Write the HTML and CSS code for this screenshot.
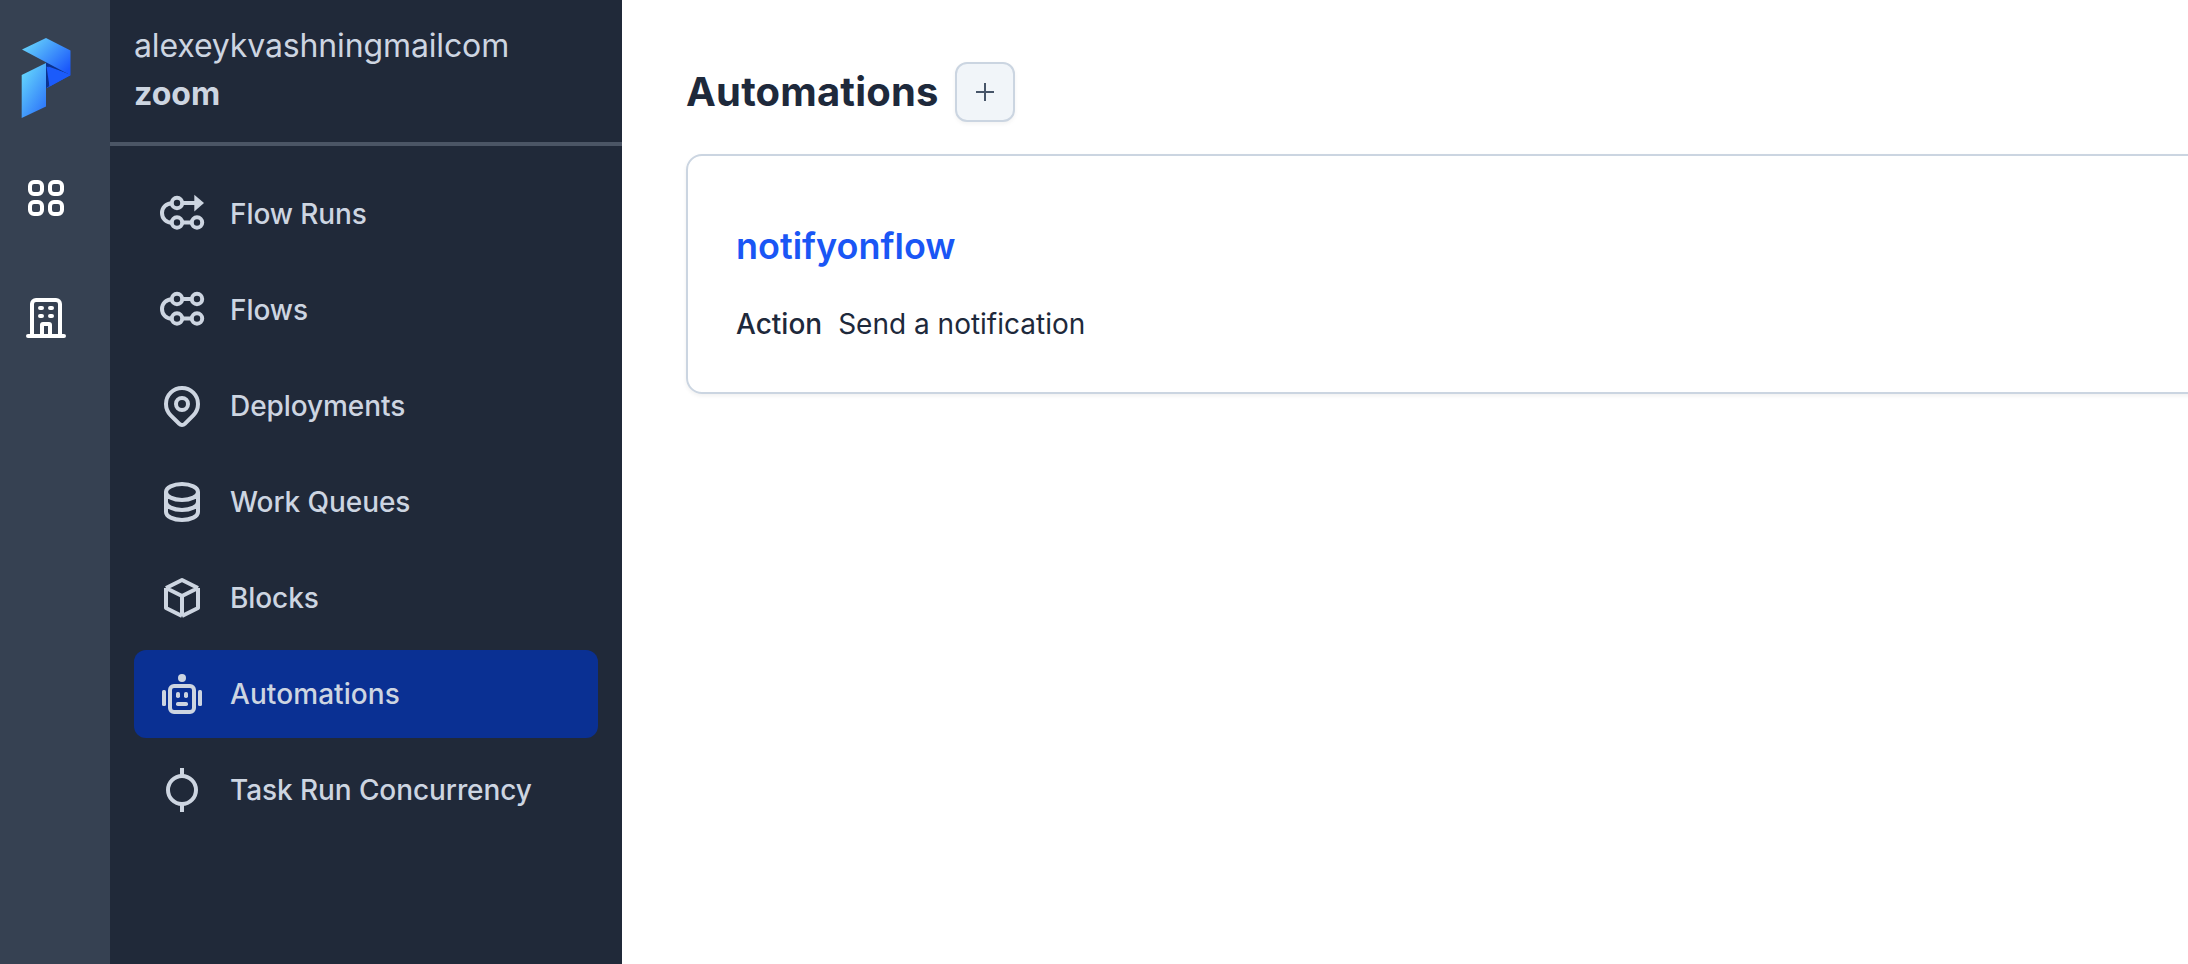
FILE: index.html
```html
<!DOCTYPE html>
<html lang="en">
<head>
<meta charset="utf-8">
<title>Automations</title>
<link rel="stylesheet" href="styles.css">
</head>
<body>
<div class="app">
  <aside class="rail">
    <svg class="logo" width="50" height="82" viewBox="0 0 50 82">
      <defs>
        <linearGradient id="top" gradientUnits="userSpaceOnUse" x1="10" y1="4" x2="43" y2="37"><stop offset="0" stop-color="#63cdfb"/><stop offset="1" stop-color="#1a57fb"/></linearGradient>
        <linearGradient id="stem" gradientUnits="userSpaceOnUse" x1="-2" y1="42" x2="30" y2="62"><stop offset="0" stop-color="#63d3fc"/><stop offset="1" stop-color="#2f78fa"/></linearGradient>
      </defs>
      <path fill="#1b5bfb" d="M25 26l24.500 12.300L26 51z"/>
      <path fill="#0b318f" d="M25 25l23 12-20.500-7.500L28.500 49 25 51z"/>
      <path fill="#1b5bfb" d="M25.500 29.500l24 8.500-21 11.500z"/>
      <path fill="url(#top)" d="M1 12.500L25 1l24.500 12.500v24.800z"/>
      <path fill="url(#stem)" d="M.700 38L25 26v43.500L.700 81z"/>
    </svg>
    <svg class="icon" viewBox="0 0 48 48"><rect x="8" y="8" width="12" height="12" rx="4"/><rect x="28" y="8" width="12" height="12" rx="4"/><rect x="8" y="28" width="12" height="12" rx="4"/><rect x="28" y="28" width="12" height="12" rx="4"/></svg>
    <svg class="icon" viewBox="0 0 48 48"><path stroke-linecap="round" d="M6 42h36M10 42V10a4 4 0 0 1 4-4h20a4 4 0 0 1 4 4v32M20 42V31a1 1 0 0 1 1-1h6a1 1 0 0 1 1 1v11M18 14h2M28 14h2M18 22h2M28 22h2"/></svg>
  </aside>
  <nav class="sidebar">
    <header class="account">
      <div class="owner">alexeykvashningmailcom</div>
      <div class="workspace">zoom</div>
    </header>
    <div class="menu">
      <a class="item"><svg class="icon" viewBox="0 0 48 48"><circle cx="19" cy="13" r="5.200"/><circle cx="19" cy="32.500" r="5.200"/><circle cx="39" cy="32.500" r="5.200"/><path d="M14 13.200C8 13.500 4 17.500 4 23s4 9.500 10 9.800M24 13h13M24 32.500h10"/><path class="solid" d="M36.300 4.800L46 13l-9.700 8.500z"/></svg>Flow Runs</a>
      <a class="item"><svg class="icon" viewBox="0 0 48 48"><circle cx="19" cy="13" r="5.200"/><circle cx="39" cy="13" r="5.200"/><circle cx="19" cy="32.500" r="5.200"/><circle cx="39" cy="32.500" r="5.200"/><path d="M14 13.200C8 13.500 4 17.500 4 23s4 9.500 10 9.800M24 13h10M24 32.500h10"/></svg>Flows</a>
      <a class="item"><svg class="icon" viewBox="0 0 48 48"><circle cx="24" cy="22" r="6"/><path d="M35.300 33.300L26.800 41.800a4 4 0 0 1-5.600 0L12.700 33.300a16 16 0 1 1 22.600 0z"/></svg>Deployments</a>
      <a class="item"><svg class="icon" viewBox="0 0 24 24"><path stroke-width="2" d="M4 7v10c0 2.210 3.582 4 8 4s8-1.790 8-4V7M4 7c0 2.210 3.582 4 8 4s8-1.790 8-4M4 7c0-2.210 3.582-4 8-4s8 1.790 8 4m0 5c0 2.210-3.582 4-8 4s-8-1.790-8-4"/></svg>Work Queues</a>
      <a class="item"><svg class="icon" viewBox="0 0 24 24"><path stroke-width="2" stroke-linejoin="round" d="M20 7l-8-4-8 4m16 0l-8 4m8-4v10l-8 4m0-10L4 7m8 4v10M4 7v10l8 4"/></svg>Blocks</a>
      <a class="item active"><svg class="icon" viewBox="0 0 48 48"><rect x="12" y="16" width="24" height="26" rx="4"/><circle class="solid" cx="24" cy="8" r="4"/><g class="solid"><rect x="4" y="20" width="4" height="16" rx="1.500"/><rect x="40" y="20" width="4" height="16" rx="1.500"/><rect x="18" y="22" width="4" height="6" rx="1.800"/><rect x="26" y="22" width="4" height="6" rx="1.800"/><rect x="18" y="32" width="12" height="4" rx="1.800"/></g></svg>Automations</a>
      <a class="item"><svg class="icon" viewBox="0 0 48 48"><circle cx="24" cy="24" r="14"/><path d="M24 2v8M24 38v8"/></svg>Task Run Concurrency</a>
    </div>
  </nav>
  <main class="content">
    <div class="heading">
      <h1>Automations</h1>
      <button class="add" aria-label="Add"><svg width="18" height="18" viewBox="0 0 18 18"><path d="M9 0v18M0 9h18"/></svg></button>
    </div>
    <section class="card">
      <h2>notifyonflow</h2>
      <p><span class="label">Action</span><span>Send a notification</span></p>
    </section>
  </main>
</div>
</body>
</html>
```
FILE: styles.css
```css
* { box-sizing: border-box; }
body { margin: 0; overflow: hidden; font-family: Inter, "Liberation Sans", sans-serif; background: #fff; color: #1e293b; }
.app { display: flex; height: 964px; }
.rail { width: 110px; flex: none; background: #364152; color: #fff; display: flex; flex-direction: column; padding: 37px 0 0 21px; }
.logo { display: block; flex: none; margin-bottom: 55px; }
.icon { width: 48px; height: 48px; flex: none; fill: none; stroke: currentColor; stroke-width: 4; }
.solid { fill: currentColor; stroke: none; }
.rail .icon { margin: 0 0 72px 1px; }
.sidebar { width: 512px; flex: none; background: #202939; color: #cdd5e1; }
.account { height: 146px; border-bottom: 4px solid #4b5565; padding: 22px 24px 0; font-size: 32px; line-height: 48px; }
.owner { letter-spacing: -0.13px; }
.workspace { font-weight: 700; }
.menu { display: flex; flex-direction: column; gap: 8px; padding: 24px; }
.item { display: flex; align-items: center; gap: 24px; height: 88px; padding: 0 24px; border-radius: 12px; font-size: 28px; font-weight: 500; letter-spacing: -0.08px; white-space: nowrap; }
.active { background: #0a3093; letter-spacing: 0.08px; }
.content { flex: 1; min-width: 0; padding: 62px 0 0 64px; }
.heading { display: flex; align-items: center; gap: 16px; height: 60px; margin-bottom: 32px; }
h1 { margin: 0; font-size: 40px; line-height: 56px; font-weight: 700; letter-spacing: 0.18px; }
.add { width: 60px; height: 60px; padding: 0; display: grid; place-items: center; background: #f1f5f9; border: 2px solid #cbd5e1; border-radius: 12px; box-shadow: 0 2px 4px rgba(0,0,0,.05); }
.add path { stroke: #475569; stroke-width: 2; fill: none; }
.card { width: 1600px; height: 240px; border: 2px solid #cbd5e1; border-radius: 16px; padding: 62px 48px 0; box-shadow: 0 2px 4px rgba(0,0,0,.06); }
h2 { margin: 0; font-size: 36px; line-height: 56px; font-weight: 600; color: #1a56f5; }
p { display: flex; gap: 16px; margin: 30px 0 0; font-size: 28px; line-height: 40px; }
.label { font-weight: 500; }
```
